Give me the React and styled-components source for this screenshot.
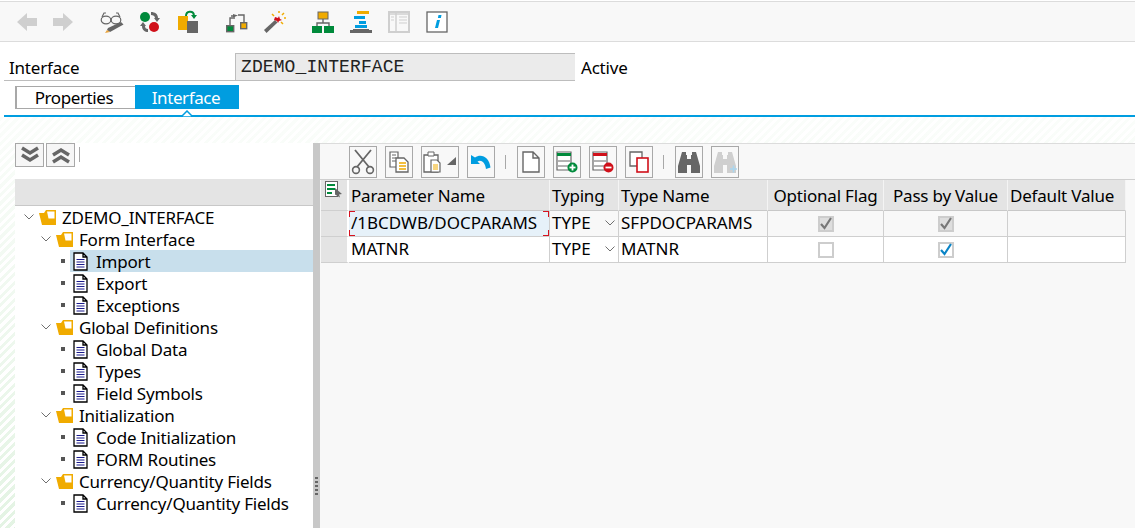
import React from "react";
import styled, { createGlobalStyle } from "styled-components";

const Global = createGlobalStyle`
  html, body { margin: 0; padding: 0; background: #fff; }
  body { font-family: "Noto Sans", "Liberation Sans", sans-serif; color: #000; }
`;

const Page = styled.div`
  width: 1135px;
  height: 528px;
  overflow: hidden;
  display: flex;
  flex-direction: column;
  font-size: 17px;
  letter-spacing: -0.2px;
`;

const AppBar = styled.div`
  margin-top: 1px;
  height: 39px;
  background: #f8f8f8;
  border-top: 1px solid #dcdcdc;
  border-bottom: 1px solid #dcdcdc;
  display: flex;
  align-items: center;
  padding-left: 9px;
`;

const BarGroup = styled.div`
  display: flex;
  align-items: center;
  margin-right: ${(p) => p.$after || 0}px;
`;

const BarSlot = styled.div`
  width: ${(p) => p.$w || 38}px;
  height: 24px;
  display: flex;
  align-items: center;
  justify-content: center;
`;

const HeaderForm = styled.div`
  height: 39px;
  padding: 11px 0 0 4px;
  display: flex;
  align-items: flex-end;
  box-sizing: border-box;
`;

const FieldLabel = styled.div`
  width: 231px;
  height: 28px;
  line-height: 29px;
  padding-left: 5px;
  box-sizing: border-box;
  border-bottom: 1px solid #bdbdbd;
`;

const FieldInput = styled.div`
  width: 340px;
  height: 28px;
  box-sizing: border-box;
  background: #ebebeb;
  border-top: 1px solid #bdbdbd;
  border-left: 1px solid #bdbdbd;
  border-bottom: 1px solid #bdbdbd;
  font-family: "Liberation Mono", monospace;
  font-size: 18px;
  letter-spacing: 0.1px;
  color: #222;
  line-height: 26px;
  padding-left: 5px;
`;

const FieldStatus = styled.div`
  height: 28px;
  line-height: 29px;
  padding-left: 6px;
`;

const TabStrip = styled.div`
  position: relative;
  height: 36px;
  margin-left: 4px;
  padding: 4px 0 0 11px;
  box-sizing: border-box;
  border-bottom: 2px solid #009de0;
  display: flex;
  align-items: flex-start;
`;

const Tab = styled.div`
  box-sizing: border-box;
  text-align: center;
  width: ${(p) => (p.$active ? 104 : 120)}px;
  height: ${(p) => (p.$active ? 24 : 23)}px;
  margin-top: ${(p) => (p.$active ? 0 : 1)}px;
  padding-right: ${(p) => (p.$active ? 2 : 4)}px;
  line-height: ${(p) => (p.$active ? 25 : 22)}px;
  letter-spacing: -0.4px;
  background: ${(p) => (p.$active ? "#009de0" : "#fff")};
  color: ${(p) => (p.$active ? "#fff" : "#000")};
  border: ${(p) => (p.$active ? "none" : "1px solid #a8a8a8")};
  border-right: none;
  border-left-width: ${(p) => (p.$active ? 0 : 2)}px;
`;

const TabCaret = styled.svg`
  position: absolute;
  left: 177px;
  bottom: -2px;
`;

const Workspace = styled.div`
  flex: 1;
  display: flex;
  padding: 26px 0 0 15px;
  background: linear-gradient(180deg, rgba(255, 255, 255, 0.85), rgba(255, 255, 255, 0.05)),
    repeating-linear-gradient(135deg, #e2f3e2 0 3px, #fff 3px 6px);
`;

const TreePanel = styled.div`
  width: 298px;
  background: #fff;
  display: flex;
  flex-direction: column;
`;

const TreeTools = styled.div`
  height: 36px;
  display: flex;
  align-items: flex-start;
  gap: 2px;
`;

const ChevronButton = styled.div`
  width: 29px;
  height: 24px;
  box-sizing: border-box;
  background: #f6f6f6;
  border: 1px solid #a8a8a8;
  display: flex;
  align-items: center;
  justify-content: center;
`;

const ToolSeparator = styled.div`
  width: 1px;
  height: ${(p) => p.$h || 15}px;
  background: #a8a8a8;
  margin: ${(p) => p.$m || "4px 0 0 2px"};
`;

const TreeHeader = styled.div`
  height: 26px;
  background: #e4e4e4;
  border-bottom: 1px solid #c8c8c8;
`;

const TreeRow = styled.div`
  height: 22px;
  display: flex;
  align-items: center;
  padding-left: ${(p) => p.$indent}px;
  white-space: nowrap;
`;

const Folder = styled.div`
  display: flex;
  align-items: center;
  gap: 5px;
`;

const FolderName = styled.span`
  margin-left: 1px;
`;

const Bullet = styled.span`
  width: 4px;
  height: 4px;
  background: #555;
  margin-left: 46px;
  flex: none;
`;

const LeafLabel = styled.div`
  flex: 1;
  height: 22px;
  margin-left: 5px;
  padding-left: 3px;
  display: flex;
  align-items: center;
  gap: 8px;
  background: ${(p) => (p.$selected ? "#c8dfec" : "transparent")};
`;

const Splitter = styled.div`
  position: relative;
  width: 7px;
  background: #c8c8c8;
`;

const SplitterGrip = styled.div`
  position: absolute;
  left: 2px;
  top: 334px;
  width: 3px;
  height: 19px;
  background: repeating-linear-gradient(180deg, #666 0 2px, transparent 2px 4px);
`;

const RightPanel = styled.div`
  flex: 1;
  background: #f8f8f8;
  padding-left: 1px;
  border-top: 1px solid #dcdcdc;
`;

const GridTools = styled.div`
  height: 36px;
  margin-left: -1px;
  box-sizing: border-box;
  padding: 2px 0 0 29px;
  border-bottom: 1px solid #cfcfcf;
  display: flex;
  align-items: flex-start;
  gap: 8px;
`;

const ToolButton = styled.div`
  width: ${(p) => p.$w || 28}px;
  height: 32px;
  box-sizing: border-box;
  border: 1px solid #a8a8a8;
  background: #f8f8f8;
  display: flex;
  align-items: center;
  justify-content: center;
`;

const Grid = styled.div`
  display: grid;
  grid-template-columns: 28px 201px 69px 149px 116px 124px 118px;
  grid-template-rows: 31px 26px 26px;
  width: 814px;
  position: relative;

  &::after {
    content: "";
    position: absolute;
    left: 100%;
    top: 30px;
    width: 20px;
    height: 1px;
    background: #cfcfcf;
  }
`;

const Cell = styled.div`
  box-sizing: border-box;
  display: flex;
  align-items: center;
  justify-content: ${(p) => (p.$center ? "center" : "flex-start")};
  padding-left: ${(p) => (p.$center ? 0 : 2)}px;
  padding-bottom: ${(p) => (p.$center ? 0 : 2)}px;
  white-space: nowrap;
  position: relative;
  letter-spacing: 0;
  border-right: 1px solid #cfcfcf;
  border-bottom: 1px solid #cfcfcf;
  background: ${(p) => p.$bg};
`;

const HeadCell = styled(Cell)`
  background: #e4e4e4;
  letter-spacing: -0.2px;
  padding-bottom: 0;
  border-right-color: #f4f4f4;
  border-bottom-color: #c8c8c8;
`;

const RowHead = styled.div`
  box-sizing: border-box;
  background: #e4e4e4;
  border-right: 2px solid #fff;
  border-bottom: 1px solid #cfcfcf;
`;

const CornerHead = styled(RowHead)`
  padding: 1px 0 0 4px;
`;

const Arrow = styled.svg`
  position: absolute;
  right: 3px;
  top: 9px;
`;

const Bracket = styled.span`
  position: absolute;
  width: 5px;
  height: 5px;
  ${(p) => (p.$top ? "top: 0;" : "bottom: 0;")}
  ${(p) => (p.$left ? "left: 0;" : "right: 0;")}
  border-color: #d6121f;
  border-style: solid;
  border-width: ${(p) => (p.$top ? "1px" : "0")} ${(p) => (p.$left ? "0" : "1px")}
    ${(p) => (p.$top ? "0" : "1px")} ${(p) => (p.$left ? "1px" : "0")};
`;

const Checkbox = styled.div`
  width: 16px;
  height: 16px;
  box-sizing: border-box;
  border: 2px solid #cdcdcd;
  background: ${(p) => (p.$disabled ? "#dedede" : "#fff")};
  display: flex;
  align-items: center;
  justify-content: center;
`;

const Tick = ({ color }) => (
  <svg width="14" height="14" viewBox="0 0 14 14" style={{ flex: "none" }}>
    <path d="M2 7l3.500 4L12 1" fill="none" stroke={color} strokeWidth="2.200" />
  </svg>
);

const G = "#666";
const O = "#f0ab00";
const GR = "#008a3b";
const R = "#d0101a";
const B = "#009de0";

const Back = () => (
  <svg width="22" height="20" viewBox="0 0 22 20">
    <path d="M1 10 11 1v5h10v8H11v5z" fill="#cfcfcf" />
  </svg>
);
const Forward = () => (
  <svg width="22" height="20" viewBox="0 0 22 20">
    <path d="M21 10 11 1v5H1v8h10v5z" fill="#cfcfcf" />
  </svg>
);
const Glasses = () => (
  <svg width="24" height="24" viewBox="0 0 24 24">
    <g fill="none" stroke={G} strokeWidth="1.200">
      <ellipse cx="6" cy="10" rx="4.800" ry="3.800" />
      <ellipse cx="16" cy="10" rx="4.800" ry="3.800" />
      <path d="M2 7l2-4h2M20 7l-2-4h-2M10.800 9.500h.4" />
    </g>
    <path d="M7 20l1-2 13-6 2.500 2.500L10 22z" fill={G} />
    <path d="M5 23l2-3 3 2z" fill="#e8a33d" />
  </svg>
);
const Activate = () => (
  <svg width="24" height="24" viewBox="0 0 24 24">
    <circle cx="7" cy="7" r="5" fill={GR} />
    <circle cx="16" cy="17" r="5" fill={R} />
    <path d="M13 2c4 0 7 2 7 6l2 0-3 4-3-4h1c0-2-2-3-4-3zM10 22c-3 0-6-2-6-6H2l3-4 3 4H7c0 2 1 3 3 3z" fill={G} />
  </svg>
);
const Transport = () => (
  <svg width="24" height="24" viewBox="0 0 24 24">
    <rect x="2" y="6" width="10" height="14" fill={O} />
    <rect x="11" y="11" width="11" height="12" fill={G} />
    <path d="M10 6c0-5 7-6 8-1" fill="none" stroke={GR} strokeWidth="2" />
    <path d="M15 5h6l-3 4z" fill={GR} />
  </svg>
);
const WhereUsed = () => (
  <svg width="24" height="24" viewBox="0 0 24 24">
    <path d="M6 15V8h5M11 6l-4 0M14 5h6v7" fill="none" stroke={G} strokeWidth="1.400" />
    <path d="M9 4l5 1.500-5 2z" fill={G} />
    <rect x="2.700" y="15.700" width="7" height="6" fill={GR} stroke={G} strokeWidth="1.400" />
    <rect x="16.700" y="12.700" width="6" height="6" fill={O} stroke={G} strokeWidth="1.400" />
  </svg>
);
const Wand = () => (
  <svg width="24" height="24" viewBox="0 0 24 24">
    <path d="M2 20 13 10l2.500 2.500L4.500 23z" fill={G} />
    <path d="M14 6l3 1 1 -2 1 3 2 1-3 1-1 2-1-2-3-1z" fill={R} transform="translate(-1 1)" />
    <path d="M17 1v2M10 4l2 2M22 8h2M21 14l-2-2M22 3l-2 2" stroke={O} strokeWidth="1.500" />
  </svg>
);
const Hierarchy = () => (
  <svg width="24" height="24" viewBox="0 0 24 24">
    <rect x="7" y="2" width="10" height="7" fill={O} stroke={G} strokeWidth="1" />
    <path d="M12 9v4M6 17v-4h12v4" fill="none" stroke={G} strokeWidth="1.400" />
    <rect x="1" y="16" width="10" height="7" fill={GR} />
    <rect x="13" y="16" width="10" height="7" fill={GR} />
  </svg>
);
const Stack = () => (
  <svg width="24" height="24" viewBox="0 0 24 24">
    <rect x="8" y="1" width="12" height="3" fill={O} />
    <rect x="5" y="6" width="11" height="3" fill={B} />
    <rect x="10" y="11" width="7" height="3" fill={B} />
    <rect x="6" y="15" width="12" height="3" fill={B} />
    <path d="M1 23v-3h3v-1h16v1h3v3z" fill={G} />
  </svg>
);
const BookOff = () => (
  <svg width="22" height="22" viewBox="0 0 22 22">
    <rect x="1" y="1" width="20" height="20" fill="#f8f8f8" stroke="#cfcfcf" strokeWidth="2" />
    <path d="M1 3h20M8 1v20" stroke="#cfcfcf" strokeWidth="1.500" />
    <path d="M3 6h3M3 9h3M11 6h8M11 9h8M11 12h8" stroke="#cfcfcf" />
  </svg>
);
const Info = () => (
  <svg width="22" height="22" viewBox="0 0 22 22">
    <rect x="1" y="1" width="20" height="20" fill="#fff" stroke={G} strokeWidth="1.300" />
    <path d="M11 9h3l-2 8h-3zM12.500 4h3l-.6 3h-3z" fill={B} />
  </svg>
);

const Scissors = () => (
  <svg width="24" height="26" viewBox="0 0 24 26">
    <path d="M20 1 6 18M4 1l14 17" stroke={G} strokeWidth="1.800" fill="none" />
    <circle cx="5" cy="21" r="3.400" fill="none" stroke={G} strokeWidth="1.600" />
    <circle cx="19" cy="21" r="3.400" fill="none" stroke={G} strokeWidth="1.600" />
  </svg>
);
const CopyDoc = () => (
  <svg width="20" height="22" viewBox="0 0 20 22">
    <path d="M1 1h8v15H1z" fill="#fff" stroke={G} strokeWidth="1.200" />
    <path d="M3 4h4M3 7h4M3 10h4" stroke={G} />
    <path d="M7 7h8l4 4v10H7z" fill="#fff" stroke={G} strokeWidth="1.300" />
    <path d="M10 12h7M10 15h7M10 18h7" stroke={O} strokeWidth="1.400" />
  </svg>
);
const PasteDoc = () => (
  <svg width="34" height="22" viewBox="0 0 34 22">
    <path d="M1 4h14v17H1z" fill="#fff" stroke={G} strokeWidth="1.300" />
    <path d="M5 1h6v4H5z" fill="#fff" stroke={G} />
    <path d="M8 9h6l3 3v9H8z" fill="#fff" stroke={G} strokeWidth="1.200" />
    <path d="M10 14h5M10 16h5M10 18h5" stroke={O} />
    <path d="M33 6v8h-9z" fill={G} />
  </svg>
);
const Undo = () => (
  <svg width="20" height="16" viewBox="0 0 20 16">
    <path d="M0 1v9h9L6.500 7.500C10 5.500 14 8 15 15l4.500-1.500C18.500 3 10-1 4 3.500z" fill={B} />
  </svg>
);
const NewDoc = () => (
  <svg width="18" height="22" viewBox="0 0 18 22">
    <path d="M1 1h10l6 6v14H1zM11 1v6h6" fill="#fff" stroke={G} strokeWidth="1.400" />
  </svg>
);
const RowDoc = ({ color, sign }) => (
  <svg width="22" height="22" viewBox="0 0 22 22">
    <path d="M1 1h14v18H1z" fill="#fff" stroke={G} strokeWidth="1.200" />
    <rect x="1" y="2" width="14" height="3" fill={color} />
    <path d="M2 10h12M2 15h12" stroke={G} />
    <circle cx="16.500" cy="16.500" r="5" fill={color} />
    <path d="M13.500 16.500h6" stroke="#fff" strokeWidth="1.800" />
    {sign && <path d="M16.500 13.500v6" stroke="#fff" strokeWidth="1.800" />}
  </svg>
);
const CopyRow = () => (
  <svg width="20" height="22" viewBox="0 0 20 22">
    <path d="M1 1h12v14H1z" fill="#fff" stroke={G} strokeWidth="1.300" />
    <rect x="8" y="7" width="11" height="14" fill="#fff" stroke={R} strokeWidth="1.600" />
  </svg>
);
const Binoculars = ({ color, plus }) => (
  <svg width="24" height="24" viewBox="0 0 24 24">
    <path
      d="M5 2h4v3h1v18H1v-7zM19 2h-4v3h-1v18h9v-7zM10 9h4v6h-4z"
      fill={color}
    />
    {plus && <path d="M17 19h7M20.500 15.500v7" stroke="#a9d6ef" strokeWidth="1.500" />}
  </svg>
);

const ExpandIcon = ({ up }) => (
  <svg width="20" height="18" viewBox="0 0 20 18" style={up ? { transform: "scaleY(-1)" } : undefined}>
    <path d="M2 2l8 5 8-5M2 9l8 5 8-5" fill="none" stroke={G} strokeWidth="3.500" />
  </svg>
);
const TreeChevron = () => (
  <svg width="10" height="6" viewBox="0 0 10 6" style={{ flex: "none" }}>
    <path d="M.500.500 5 5 9.500.500" fill="none" stroke="#6f6f6f" strokeWidth="1" />
  </svg>
);
const FolderIcon = () => (
  <svg width="17" height="15" viewBox="0 0 17 15" style={{ flex: "none" }}>
    <path d="M0 3h5l2-3h10v15H3z" fill={O} />
    <path d="M8 1.500h7.500v7H9.500z" fill="#fff" />
  </svg>
);
const LeafDoc = () => (
  <svg width="15" height="19" viewBox="0 0 15 19" style={{ flex: "none" }}>
    <path d="M1 1h9l4 4v13H1zM10 1v4h4" fill="#fff" stroke="#000" strokeWidth="1.300" />
    <path d="M3.500 7.500h8M3.500 10h8M3.500 12.500h8M3.500 15h8" stroke="#1a1a8c" strokeWidth="1" />
  </svg>
);
const CornerIcon = () => (
  <svg width="18" height="17" viewBox="0 0 18 17" style={{ display: "block" }}>
    <rect x=".5" y=".5" width="12" height="15" fill="#fff" stroke={G} />
    <path d="M2 4h8M2 8h8M2 12h5" stroke={GR} strokeWidth="2" />
    <path d="M10 7l7 6-3 .5 1 3-5-3z" fill={G} />
  </svg>
);
const SmallArrow = () => (
  <Arrow width="10" height="6" viewBox="0 0 10 6">
    <path d="M.500.500 5 5 9.500.500" fill="none" stroke="#6f6f6f" />
  </Arrow>
);

const appGroups = [
  { w: 36, after: 12, icons: [Back, Forward] },
  { after: 10, icons: [Glasses, Activate, Transport] },
  { after: 11, icons: [WhereUsed, Wand] },
  { icons: [Hierarchy, Stack, BookOff, Info] },
];

const tree = [
  {
    title: "Form Interface",
    items: ["Import", "Export", "Exceptions"],
  },
  {
    title: "Global Definitions",
    items: ["Global Data", "Types", "Field Symbols"],
  },
  {
    title: "Initialization",
    items: ["Code Initialization", "FORM Routines"],
  },
  {
    title: "Currency/Quantity Fields",
    items: ["Currency/Quantity Fields"],
  },
];

const FolderRow = ({ indent, label }) => (
  <TreeRow $indent={indent}>
    <Folder>
      <TreeChevron />
      <FolderIcon />
      <FolderName>{label}</FolderName>
    </Folder>
  </TreeRow>
);

const App = () => (
  <Page>
    <Global />
    <AppBar>
      {appGroups.map((group, i) => (
        <BarGroup key={i} $after={group.after}>
          {group.icons.map((Icon, j) => (
            <BarSlot key={j} $w={group.w}>
              <Icon />
            </BarSlot>
          ))}
        </BarGroup>
      ))}
    </AppBar>
    <HeaderForm>
      <FieldLabel>Interface</FieldLabel>
      <FieldInput>ZDEMO_INTERFACE</FieldInput>
      <FieldStatus>Active</FieldStatus>
    </HeaderForm>
    <TabStrip>
      <Tab>Properties</Tab>
      <Tab $active>Interface</Tab>
      <TabCaret width="12" height="7" viewBox="0 0 12 7">
        <path d="M0 7 6 1l6 6z" fill="#fff" stroke="#009de0" strokeWidth="1.500" />
      </TabCaret>
    </TabStrip>
    <Workspace>
      <TreePanel>
        <TreeTools>
          <ChevronButton>
            <ExpandIcon />
          </ChevronButton>
          <ChevronButton>
            <ExpandIcon up />
          </ChevronButton>
          <ToolSeparator />
        </TreeTools>
        <TreeHeader />
        <FolderRow indent={9} label="ZDEMO_INTERFACE" />
        {tree.map((node) => (
          <React.Fragment key={node.title}>
            <FolderRow indent={26} label={node.title} />
            {node.items.map((item) => (
              <TreeRow key={item} $indent={0}>
                <Bullet />
                <LeafLabel $selected={item === "Import"}>
                  <LeafDoc />
                  {item}
                </LeafLabel>
              </TreeRow>
            ))}
          </React.Fragment>
        ))}
      </TreePanel>
      <Splitter>
        <SplitterGrip />
      </Splitter>
      <RightPanel>
        <GridTools>
          <ToolButton><Scissors /></ToolButton>
          <ToolButton><CopyDoc /></ToolButton>
          <ToolButton $w={38}><PasteDoc /></ToolButton>
          <ToolButton><Undo /></ToolButton>
          <ToolSeparator $h={14} $m="9px 3px 0 2px" />
          <ToolButton><NewDoc /></ToolButton>
          <ToolButton><RowDoc color={GR} sign /></ToolButton>
          <ToolButton><RowDoc color={R} /></ToolButton>
          <ToolButton><CopyRow /></ToolButton>
          <ToolSeparator $h={14} $m="9px 3px 0 2px" />
          <ToolButton><Binoculars color={G} /></ToolButton>
          <ToolButton><Binoculars color="#cfcfcf" plus /></ToolButton>
        </GridTools>
        <Grid>
          <CornerHead><CornerIcon /></CornerHead>
          <HeadCell>Parameter Name</HeadCell>
          <HeadCell>Typing</HeadCell>
          <HeadCell>Type Name</HeadCell>
          <HeadCell $center>Optional Flag</HeadCell>
          <HeadCell $center>Pass by Value</HeadCell>
          <HeadCell>Default Value</HeadCell>

          <RowHead />
          <Cell $bg="#e6f1f9">
            /1BCDWB/DOCPARAMS
            <Bracket $top $left />
            <Bracket $top />
            <Bracket $left />
            <Bracket />
          </Cell>
          <Cell>TYPE<SmallArrow /></Cell>
          <Cell>SFPDOCPARAMS</Cell>
          <Cell $center><Checkbox $disabled><Tick color="#777" /></Checkbox></Cell>
          <Cell $center><Checkbox $disabled><Tick color="#777" /></Checkbox></Cell>
          <Cell />

          <RowHead />
          <Cell $bg="#fff">MATNR</Cell>
          <Cell $bg="#fff">TYPE<SmallArrow /></Cell>
          <Cell $bg="#fff">MATNR</Cell>
          <Cell $bg="#fff" $center><Checkbox /></Cell>
          <Cell $bg="#fff" $center><Checkbox><Tick color="#0a84c6" /></Checkbox></Cell>
          <Cell $bg="#fff" />
        </Grid>
      </RightPanel>
    </Workspace>
  </Page>
);

export default App;
